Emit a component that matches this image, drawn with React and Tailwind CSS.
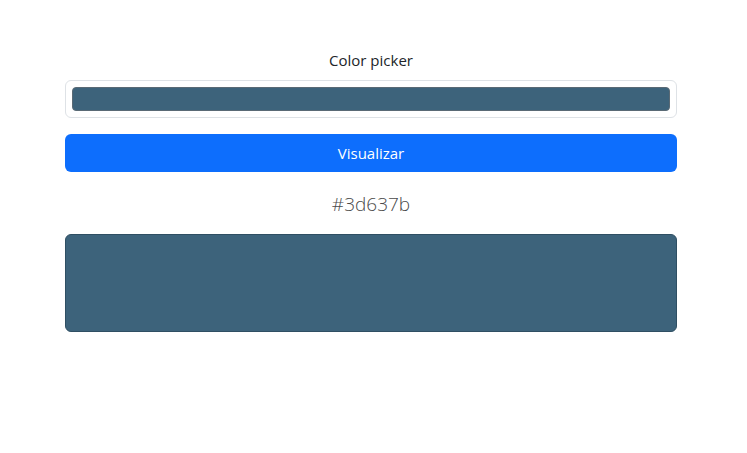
export default function App() {
  const color = "#3d637b";

  return (
    <div className="min-h-screen bg-white" style={{ fontFamily: '"Open Sans", "Noto Sans", sans-serif' }}>
      <div className="ml-[65px] w-[612px] pt-[48px]">
        <label className="block text-center text-[15px] leading-6 text-[#212529] mb-[8px]">Color picker</label>
        <div className="h-[38px] rounded-md border border-[#dee2e6] p-[6px]">
          <div className="h-full rounded-[4px] border border-[#5a6a75]" style={{ backgroundColor: color }} />
        </div>
        <button className="mt-4 h-[38px] w-full rounded-md bg-[#0d6efd] text-[15px] text-white">Visualizar</button>
        <p className="mt-[17px] text-center text-[19px] font-light leading-[30px] text-[#4a4a4a]">{color}</p>
        <div className="mt-[15px] h-[98px] rounded-md border border-[#2f4f63]" style={{ backgroundColor: color }} />
      </div>
    </div>
  );
}
